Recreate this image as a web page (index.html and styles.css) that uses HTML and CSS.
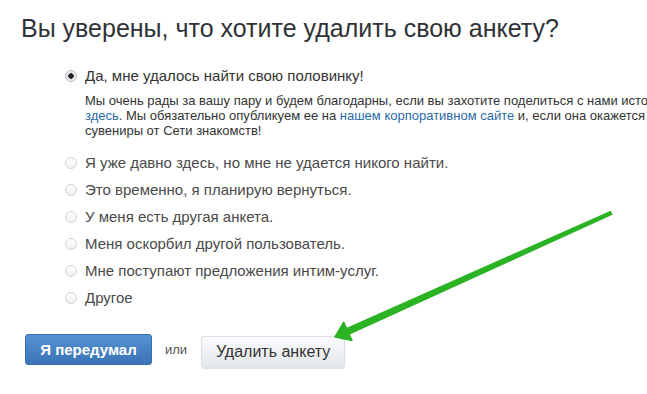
FILE: index.html
```html
<!DOCTYPE html>
<html lang="ru">
<head>
    <meta charset="UTF-8">
    <title>Удаление анкеты</title>
    <link rel="stylesheet" href="styles.css">
</head>
<body>
    <div class="page">
        <h1>Вы уверены, что хотите удалить свою анкету?</h1>

        <ul class="reasons">
            <li class="reason">
                <label><input type="radio" name="reason" checked> Да, мне удалось найти свою половинку!</label>
                <p class="note">
                    Мы очень рады за вашу пару и будем благодарны, если вы захотите поделиться с нами историей вашего знакомства<br>
                    <a href="#">здесь</a>. Мы обязательно опубликуем ее на <a href="#">нашем корпоративном сайте</a> и, если она окажется самой интересной, вы получите<br>
                    сувениры от Сети знакомств!
                </p>
            </li>
            <li class="reason"><label><input type="radio" name="reason"> Я уже давно здесь, но мне не удается никого найти.</label></li>
            <li class="reason"><label><input type="radio" name="reason"> Это временно, я планирую вернуться.</label></li>
            <li class="reason"><label><input type="radio" name="reason"> У меня есть другая анкета.</label></li>
            <li class="reason"><label><input type="radio" name="reason"> Меня оскорбил другой пользователь.</label></li>
            <li class="reason"><label><input type="radio" name="reason"> Мне поступают предложения интим-услуг.</label></li>
            <li class="reason"><label><input type="radio" name="reason"> Другое</label></li>
        </ul>

        <div class="actions">
            <button class="btn btn-primary">Я передумал</button>
            <span class="or">или</span>
            <button class="btn btn-default">Удалить анкету</button>
        </div>

        <!-- стрелка-подсказка поверх страницы -->
        <svg class="arrow" width="647" height="394" viewBox="0 0 647 394">
            <polygon points="610.4,211.6 346.6,328.6 343.7,322.2 335,337 351.9,340.4 349,334 611.6,214.4"
                     fill="#2bb324" stroke="#2bb324" stroke-width="1.5" stroke-linejoin="round"/>
        </svg>
    </div>
</body>
</html>
```

FILE: styles.css
```css
html {
    overflow: hidden;
}
body {
    margin: 0;
    background: #fff;
    font-family: "Liberation Sans", Arial, sans-serif;
    color: #333;
}
.page {
    position: relative;
    padding: 14px 0 0 21px;
    height: 380px;
}
h1 {
    margin: 0;
    font-size: 25px;
    font-weight: normal;
    line-height: 28px;
    color: #2f3237;
}
.reasons {
    list-style: none;
    margin: 26px 0 0;
    padding: 0 0 0 44px;
}
.reason {
    margin-bottom: 11px;
}
.reason:first-child {
    margin-bottom: 17px;
}
.reason label {
    display: flex;
    align-items: center;
    gap: 8px;
    font-size: 15px;
    line-height: 16px;
    color: #4a4a4a;
    white-space: nowrap;
}
.reason:first-child label {
    color: #333;
}
.reason input {
    appearance: none;
    margin: 0;
    width: 12px;
    height: 12px;
    border: 1px solid #cfd3d8;
    border-radius: 50%;
    background: linear-gradient(#fff, #eef0f2);
    box-sizing: border-box;
    flex: none;
}
.reason input:checked {
    border-color: #b9bec4;
    background: radial-gradient(circle, #222 0 2.5px, #e9ebee 3px);
}
.note {
    margin: 9px 0 0 20px;
    font-size: 13px;
    line-height: 15px;
    color: #333;
    white-space: nowrap;
}
.note a {
    color: #2a6aa8;
    text-decoration: none;
}
.actions {
    display: flex;
    align-items: center;
    margin-top: 24px;
    padding-left: 4px;
}
.btn {
    font-family: "Liberation Sans", Arial, sans-serif;
    border-radius: 3px;
    cursor: pointer;
}
.btn-primary {
    height: 31px;
    width: 127px;
    border: 1px solid #3a6eab;
    background: linear-gradient(#5592d4, #3b73b6);
    color: #fff;
    font-size: 15px;
    font-weight: bold;
}
.or {
    margin: 0 14px 0 13px;
    font-size: 13px;
    color: #555;
}
.btn-default {
    height: 32px;
    width: 144px;
    margin-top: 6px;
    border: 1px solid #dde1e5;
    background: linear-gradient(#fafbfc, #e3e7eb);
    box-shadow: 0 1px 1px rgba(0,0,0,0.12);
    color: #333;
    font-size: 16px;
}
.arrow {
    position: absolute;
    left: 0;
    top: 0;
    pointer-events: none;
}
```
